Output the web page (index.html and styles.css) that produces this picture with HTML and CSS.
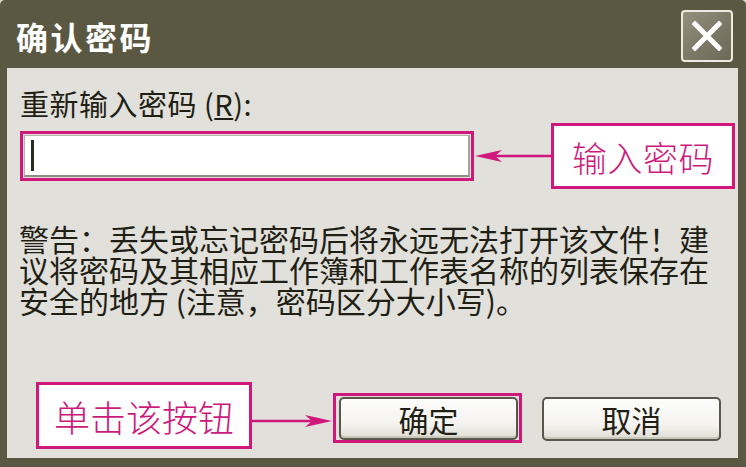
FILE: index.html
```html
<!DOCTYPE html>
<html lang="zh-CN">
<head>
<meta charset="utf-8">
<title>确认密码</title>
<link rel="stylesheet" href="styles.css">
</head>
<body>
<div class="window">
  <div class="titlebar">
    <span class="title">确认密码</span>
    <button class="close" aria-label="关闭">
      <svg width="30" height="30" viewBox="0 0 30 30"><path d="M3 3 L27 27 M27 3 L3 27" stroke="#ffffff" stroke-width="5" stroke-linecap="square" fill="none"/></svg>
    </button>
  </div>
  <div class="content">
    <div class="label">重新输入密码 (<u>R</u>):</div>
    <div class="input-row">
      <div class="hl input-hl"><div class="input"><span class="caret"></span></div></div>
      <svg class="arrow" width="77" height="16" viewBox="0 0 77 16"><line x1="18" y1="8" x2="77" y2="8" stroke="#d0187c" stroke-width="2.5"/><polygon points="1,8 28,2 21,8 28,14" fill="#d0187c"/></svg>
      <div class="callout callout-input">输入密码</div>
    </div>
    <div class="warning">
      <span class="line">警告：丢失或忘记密码后将永远无法打开该文件！建</span>
      <span class="line">议将密码及其相应工作簿和工作表名称的列表保存在</span>
      <span class="line">安全的地方 (注意，密码区分大小写)。</span>
    </div>
    <div class="button-row">
      <div class="callout callout-btn">单击该按钮</div>
      <svg class="arrow arrow-right" width="81" height="16" viewBox="0 0 81 16"><line x1="0" y1="8" x2="62" y2="8" stroke="#d0187c" stroke-width="2.5"/><polygon points="80,8 53,2 60,8 53,14" fill="#d0187c"/></svg>
      <div class="hl btn-hl"><button class="btn">确定</button></div>
      <button class="btn btn-cancel">取消</button>
    </div>
  </div>
</div>
</body>
</html>
```
FILE: styles.css
```css
html, body {
  margin: 0;
  padding: 0;
  background: #d9d8d2;
}
.window {
  width: 746px;
  height: 467px;
  background: #5a5842;
  border-radius: 5px 5px 0 0;
  display: flex;
  flex-direction: column;
  font-family: "Noto Sans CJK SC", "Noto Sans", sans-serif;
  overflow: hidden;
}
.titlebar {
  height: 68px;
  box-sizing: border-box;
  padding: 4px 13px 0 16px;
  display: flex;
  align-items: center;
  justify-content: space-between;
}
.title {
  color: #ffffff;
  font-size: 32px;
  font-weight: 700;
  letter-spacing: 2.5px;
  line-height: 34px;
}
.close {
  width: 52px;
  height: 52px;
  box-sizing: border-box;
  border: 2px solid #ecebe2;
  border-radius: 4px;
  background: linear-gradient(135deg, #93917d 0%, #7b7965 55%, #6c6a56 100%);
  display: flex;
  align-items: center;
  justify-content: center;
  padding: 0;
}
.content {
  flex: 1;
  margin: 0 8px 9px 7px;
  background: #e1e0db;
  display: flex;
  flex-direction: column;
  padding: 20px 0 9px 13px;
  color: #1f1f15;
}
.label {
  font-size: 29px;
  line-height: 30px;
  letter-spacing: 0.5px;
}
.label u {
  text-underline-offset: 2px;
}
.input-row {
  display: flex;
  align-items: center;
  margin-top: 5px;
}
.hl {
  border: 3px solid #d0187c;
  box-sizing: border-box;
}
.input-hl {
  width: 454px;
  height: 50px;
  padding: 1px;
}
.input {
  height: 100%;
  box-sizing: border-box;
  background: #ffffff;
  border: 1px solid #b4b3ab;
  border-bottom: 2px solid #8e8d86;
  border-right: 2px solid #a4a39c;
  display: flex;
  align-items: center;
  padding-left: 6px;
}
.caret {
  width: 3px;
  height: 31px;
  background: #2d2a1e;
}
.arrow {
  display: block;
  flex: none;
}
.callout {
  border: 3px solid #d0187c;
  background: #ffffff;
  box-sizing: border-box;
  color: #cc1a7c;
  font-weight: 300;
  display: flex;
  align-items: center;
  justify-content: center;
  flex: none;
}
.callout-input {
  width: 184px;
  height: 66px;
  font-size: 35px;
  letter-spacing: 0.5px;
}
.warning {
  margin: 34px 0 0 -1px;
  display: flex;
  flex-direction: column;
}
.warning .line {
  display: block;
  height: 31px;
  font-size: 30px;
  line-height: 31px;
  white-space: nowrap;
}
.button-row {
  margin-top: auto;
  display: flex;
  align-items: flex-start;
  padding-left: 16px;
}
.callout-btn {
  width: 216px;
  height: 67px;
  font-size: 36px;
}
.arrow-right {
  margin-top: 31px;
}
.btn-hl {
  width: 189px;
  height: 50px;
  margin-top: 11px;
  padding: 1px 1px 0 3px;
}
.btn {
  width: 179px;
  height: 43px;
  box-sizing: border-box;
  border: 2px solid #59574a;
  border-radius: 5px;
  background: linear-gradient(#fdfdfc 0%, #f4f3ef 65%, #dedcd4 100%);
  box-shadow: inset 0 -2px 0 #cac7bb;
  font-family: "Noto Sans CJK SC", sans-serif;
  font-size: 30px;
  line-height: 36px;
  color: #1f1f15;
  padding: 0;
}
.btn-cancel {
  margin-left: 20px;
  margin-top: 15px;
  height: 44px;
}
```
